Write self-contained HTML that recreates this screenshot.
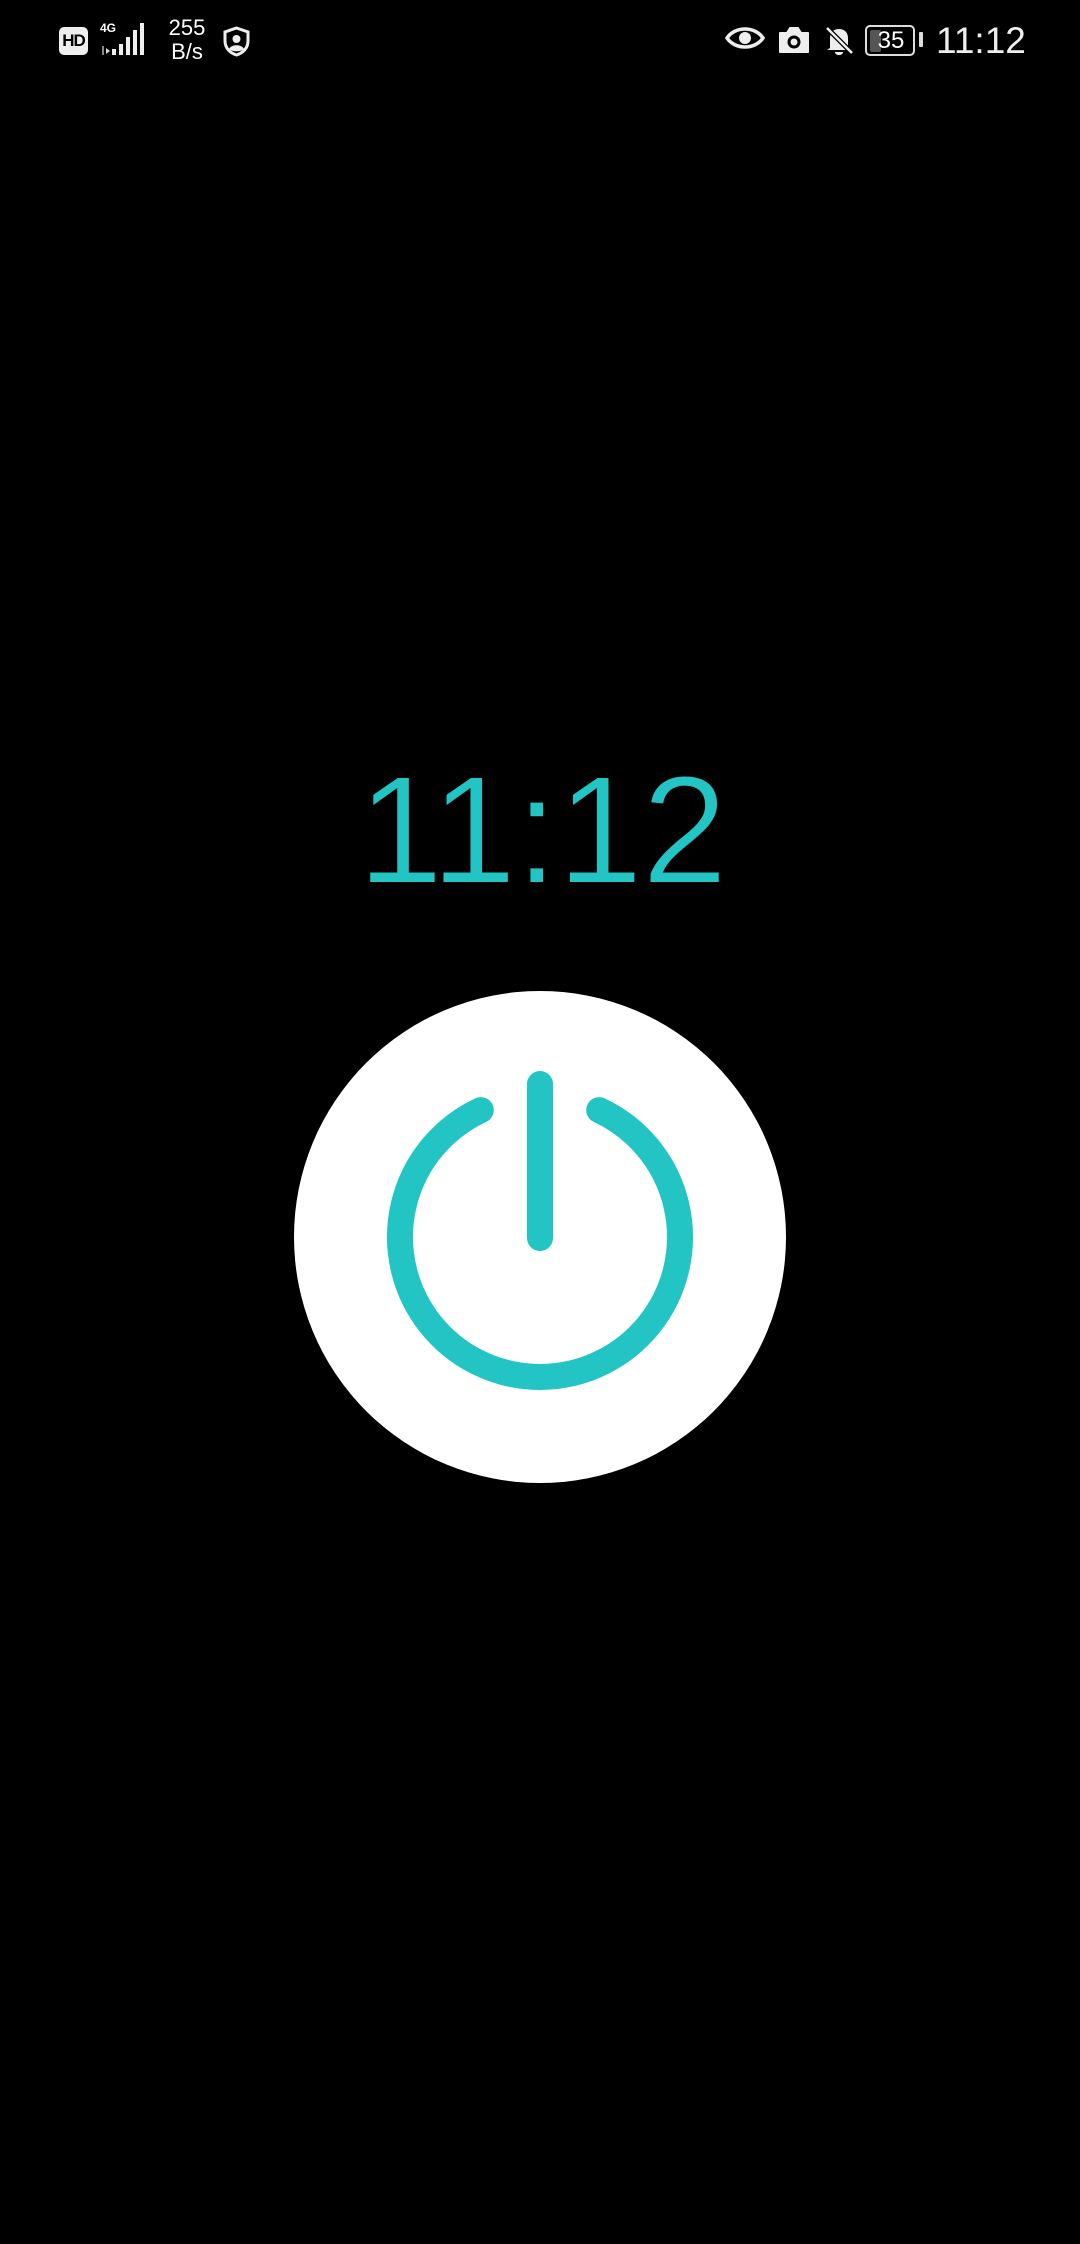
<!DOCTYPE html>
<html><head><meta charset="utf-8"><style>
html,body{margin:0;padding:0;background:#000;}
body{width:1080px;height:2244px;position:relative;overflow:hidden;font-family:"Liberation Sans",sans-serif;color:#fff;}
.a{position:absolute;}
</style></head><body>
<div class="a" style="left:59px;top:27px;width:29px;height:28px;background:#eee;border-radius:5px;color:#000;font-weight:bold;font-size:17px;line-height:28px;text-align:center;letter-spacing:-1px">HD</div>
<div class="a" style="left:100px;top:22px;font-size:12px;font-weight:bold;line-height:12px">4G</div>
<svg class="a" style="left:100px;top:22px" width="52" height="34" viewBox="0 0 52 34">
<rect x="2" y="24" width="2" height="9" fill="#888"/>
<path d="M6 26 L10 29 L6 32 Z" fill="#ddd"/>
<rect x="12" y="27" width="4" height="6" fill="#eee"/>
<rect x="19" y="22" width="4" height="11" fill="#eee"/>
<rect x="26" y="15" width="4" height="18" fill="#eee"/>
<rect x="33" y="8" width="4" height="25" fill="#eee"/>
<rect x="40" y="1" width="4" height="32" fill="#eee"/>
</svg>
<div class="a" style="left:164px;top:16px;width:46px;text-align:center;font-size:22px;line-height:24px">255<br>B/s</div>
<svg class="a" style="left:222px;top:26px" width="29" height="31" viewBox="0 0 29 31">
<path d="M14.5 2 L26 6 V15 C26 22 21 27 14.5 29 C8 27 3 22 3 15 V6 Z" fill="none" stroke="#eee" stroke-width="3"/>
<circle cx="14.5" cy="13" r="4" fill="#eee"/>
<path d="M7 23 C9 18 20 18 22 23 C19 26 10 26 7 23Z" fill="#eee"/>
</svg>
<svg class="a" style="left:725px;top:26px" width="40" height="24" viewBox="0 0 40 24">
<path d="M2 12 C10 0 30 0 38 12 C30 24 10 24 2 12Z" fill="none" stroke="#eee" stroke-width="3.5"/>
<circle cx="20" cy="12" r="6" fill="#eee"/>
</svg>
<svg class="a" style="left:777px;top:26px" width="34" height="28" viewBox="0 0 34 28">
<path d="M3 7 H10 L13 2 H21 L24 7 H31 V26 H3Z" fill="#eee" stroke="#eee" stroke-width="2" stroke-linejoin="round"/>
<circle cx="17" cy="16" r="5" fill="none" stroke="#000" stroke-width="3"/>
</svg>
<svg class="a" style="left:823px;top:24px" width="32" height="34" viewBox="0 0 32 34">
<path d="M7 24 V14 C7 8 11 5 16 5 C21 5 25 8 25 14 V24 L28 26 H4 Z" fill="#eee"/>
<path d="M12 28 C12 32 20 32 20 28Z" fill="#eee"/>
<line x1="3" y1="3" x2="30" y2="30" stroke="#000" stroke-width="5"/>
<line x1="4" y1="4" x2="29" y2="29" stroke="#eee" stroke-width="2.5"/>
</svg>
<div class="a" style="left:865px;top:25px;width:46px;height:27px;border:2.5px solid #ddd;border-radius:5px;"></div>
<div class="a" style="left:870px;top:30px;width:11px;height:22px;background:#555;border-radius:2px"></div>
<div class="a" style="left:866px;top:26px;width:50px;text-align:center;font-size:24px;line-height:30px;">35</div>
<div class="a" style="left:919px;top:32px;width:4px;height:15px;background:#ddd;border-radius:1px"></div>
<div class="a" style="left:936px;top:20px;font-size:37px;line-height:42px;color:#eee">11:12</div>
<div class="a" style="left:0;top:740px;width:1084px;text-align:center;font-size:154px;line-height:180px;color:#22c4c4;letter-spacing:-1px;-webkit-text-stroke:2px #000">11:12</div>
<svg class="a" style="left:293px;top:990px" width="494" height="494" viewBox="0 0 494 494">
<circle cx="247" cy="247" r="246" fill="#fff"/>
<path d="M187.8 120.1 A140 140 0 1 0 306.2 120.1" fill="none" stroke="#22c4c4" stroke-width="26" stroke-linecap="round"/>
<line x1="247" y1="94" x2="247" y2="248" stroke="#22c4c4" stroke-width="26" stroke-linecap="round"/>
</svg>
</body></html>
